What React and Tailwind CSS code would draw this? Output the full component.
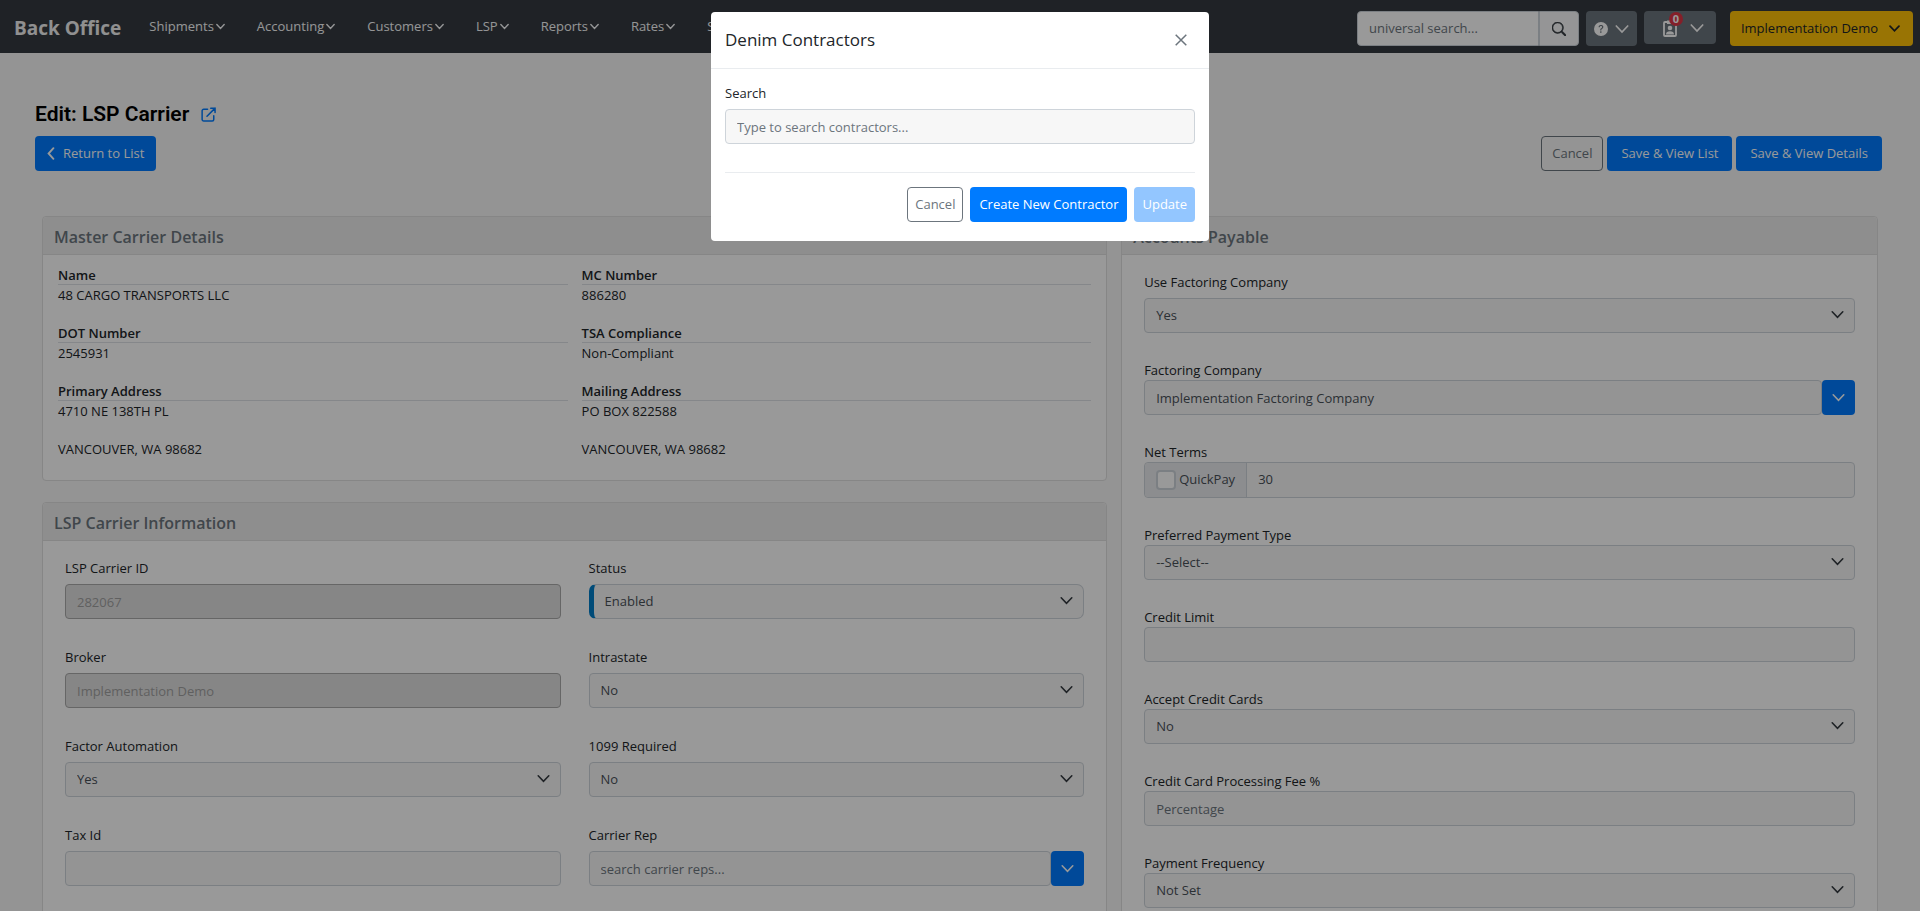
import React, { useState } from "react";
import { BsQuestionCircleFill, BsSearch } from "react-icons/bs";

const navItems = ["Shipments", "Accounting", "Customers", "LSP", "Reports", "Rates", "Settings"];

const carrierDetails = [
  { label: "Name", lines: ["48 CARGO TRANSPORTS LLC"] },
  { label: "MC Number", lines: ["886280"] },
  { label: "DOT Number", lines: ["2545931"] },
  { label: "TSA Compliance", lines: ["Non-Compliant"] },
  { label: "Primary Address", lines: ["4710 NE 138TH PL", "VANCOUVER, WA 98682"] },
  { label: "Mailing Address", lines: ["PO BOX 822588", "VANCOUVER, WA 98682"] },
];

const controlClass =
  "block w-full h-[35px] rounded border border-[#ced4da] bg-[#f7f7f7] px-[11px] text-[13px] text-[#495057] placeholder:text-[#6c757d] focus:outline-none";

const disabledClass =
  "block w-full h-[35px] rounded border border-[#aaaaaa] bg-[#e0e0e0] px-[11px] text-[13px] text-[#a0a0a0]";

function ChevronDown({ className, strokeWidth = 1.7 }) {
  return (
    <svg viewBox="0 0 14 14" className={className} fill="none" stroke="currentColor" strokeWidth={strokeWidth} strokeLinecap="round">
      <path d="M1.3 4l5.7 6 5.7-6" />
    </svg>
  );
}

function ChevronLeft({ className }) {
  return (
    <svg viewBox="0 0 8 14" className={className} fill="none" stroke="currentColor" strokeWidth="2" strokeLinecap="round">
      <path d="M6.6 1.3L1.4 7l5.2 5.7" />
    </svg>
  );
}

function ExternalLink({ className }) {
  return (
    <svg viewBox="0 0 16 16" className={className} fill="none" stroke="currentColor" strokeWidth="1.6" strokeLinecap="round" strokeLinejoin="round">
      <path d="M7 2.4H2.8A1.6 1.6 0 0 0 1.2 4v9.2a1.6 1.6 0 0 0 1.6 1.6H12a1.6 1.6 0 0 0 1.6-1.6V9.4" />
      <path d="M6.4 9.8L15 1.2M10.4 1.2H15v4.6" />
    </svg>
  );
}

function ClipboardUser({ className }) {
  return (
    <svg viewBox="0 0 14 18" className={className}>
      <rect x="1" y="3" width="12" height="14" rx="1" fill="none" stroke="currentColor" strokeWidth="1.8" />
      <path fill="currentColor" d="M4 1.5h2a1.2 1.2 0 0 1 2 0h2v3.5H4z" />
      <circle cx="7" cy="9" r="2.3" fill="currentColor" />
      <path fill="currentColor" d="M3 15.4c0-2 1.5-3.2 4-3.2s4 1.2 4 3.2z" />
    </svg>
  );
}

function Card({ title, children }) {
  return (
    <section className="rounded border border-[#dfdfdf] bg-white">
      <h2 className="rounded-t border-b border-[#dfdfdf] bg-[#ededed] px-[11px] pt-[10px] pb-[6px] text-base leading-[21px] font-semibold text-[#6c757d]">
        {title}
      </h2>
      {children}
    </section>
  );
}

function Field({ id, label, tight, children }) {
  return (
    <div>
      <label htmlFor={id} className={tight ? "block leading-[19px]" : "mb-[6px] block leading-5"}>
        {label}
      </label>
      {children}
    </div>
  );
}

function Select({ id, options, accent }) {
  return (
    <div className="relative">
      <select
        id={id}
        className={
          accent
            ? "block w-full h-[35px] appearance-none rounded-[7px] border border-l-[5px] border-[#ced4da] border-l-[#007dc8] bg-[#f7f7f7] px-[11px] text-[13px] text-[#495057] focus:outline-none"
            : controlClass + " appearance-none"
        }
      >
        {options.map((option) => (
          <option key={option}>{option}</option>
        ))}
      </select>
      <ChevronDown className="pointer-events-none absolute top-[10px] right-[11px] h-[13px] w-[13px] text-[#343a40]" />
    </div>
  );
}

function Combo({ id, value, placeholder }) {
  return (
    <div className="flex">
      <input id={id} type="text" defaultValue={value} placeholder={placeholder} className={controlClass + " min-w-0 flex-1"} />
      <button type="button" aria-label="Show options" className="flex h-[35px] w-[33px] items-center justify-center rounded bg-[#007bff] text-white">
        <ChevronDown className="h-[13px] w-[13px]" />
      </button>
    </div>
  );
}

function Navbar() {
  return (
    <header className="flex h-[53px] items-start justify-between bg-[#343a40] pr-[7px] pl-[14px] text-[#f8f9fa]">
      <div className="flex items-start">
        <a href="#" className="mr-[28px] py-[15px] text-[19px] leading-[26px] font-bold text-[#f0f0f0]">
          Back Office
        </a>
        <nav className="flex gap-8 pt-4">
          {navItems.map((item) => (
            <a key={item} href="#" className="flex items-center gap-[2px] leading-5">
              {item}
              <ChevronDown className="h-[9px] w-[9px]" strokeWidth={2.2} />
            </a>
          ))}
        </nav>
      </div>

      <div className="flex items-start pt-[11px]">
        <div className="mr-[7px] flex h-[35px]">
          <input
            type="text"
            aria-label="universal search"
            placeholder="universal search..."
            className="w-[182px] rounded-l border border-[#ced4da] bg-white px-[11px] text-[13px] placeholder:text-[#6c757d]"
          />
          <button type="button" aria-label="Search" className="flex w-10 items-center justify-center rounded-r border border-[#ced4da] bg-[#f8f9fa] text-[#343a40]">
            <BsSearch className="h-[14px] w-[14px]" strokeWidth={0.7} />
          </button>
        </div>
        <button type="button" aria-label="Help" className="mr-[7px] flex h-[35px] w-[51px] items-center justify-center gap-[7px] rounded bg-[#6c757d] text-white">
          <BsQuestionCircleFill className="h-[14px] w-[14px]" />
          <ChevronDown className="h-[14px] w-[14px]" />
        </button>
        <button type="button" aria-label="Tasks" className="relative mr-[14px] flex h-[33px] w-[72px] items-center justify-center gap-[13px] rounded bg-[#6c757d] pl-2 text-white">
          <ClipboardUser className="h-[18px] w-[14px]" />
          <ChevronDown className="h-[14px] w-[14px]" />
          <span className="absolute top-[1px] left-[25px] flex h-[14px] w-[14px] items-center justify-center rounded-full bg-[#dc3545] text-[11px] font-bold">
            0
          </span>
        </button>
        <button type="button" className="flex h-[35px] items-center gap-[11px] rounded bg-[#ffc107] pr-[13px] pl-[11px] text-[#212529]">
          Implementation Demo
          <ChevronDown className="h-[11px] w-[11px]" strokeWidth={2.2} />
        </button>
      </div>
    </header>
  );
}

function ContractorModal({ onClose }) {
  return (
    <div className="fixed inset-0 bg-black/40 px-4 pt-3">
      <div role="dialog" aria-labelledby="modal-title" className="mx-auto max-w-[498px] rounded bg-white">
        <div className="flex h-[57px] items-center justify-between border-b border-[#e9ecef] px-[14px]">
          <h2 id="modal-title" className="text-[17px] leading-6 font-medium text-[#212529]">
            Denim Contractors
          </h2>
          <button type="button" aria-label="Close" onClick={onClose} className="p-2 text-[#6c757d]">
            <svg viewBox="0 0 12 12" className="h-3 w-3" fill="none" stroke="currentColor" strokeWidth="1.5">
              <path d="M0.7 0.7l10.6 10.6M11.3 0.7L0.7 11.3" />
            </svg>
          </button>
        </div>
        <div className="px-[14px] pt-[14px] pb-[19px]">
          <Field id="contractor-search" label="Search">
            <input id="contractor-search" type="text" placeholder="Type to search contractors..." className={controlClass} />
          </Field>
          <hr className="mt-7 mb-[14px] border-[#e9ecef]" />
          <div className="flex justify-end gap-[7px]">
            <button type="button" onClick={onClose} className="h-[35px] rounded border border-[#6c757d] px-[7px] text-[#6c757d]">
              Cancel
            </button>
            <button type="button" className="h-[35px] rounded bg-[#007bff] px-[9px] font-medium text-white">
              Create New Contractor
            </button>
            <button type="button" disabled className="h-[35px] rounded bg-[#93c6ff] px-2 font-medium text-white">
              Update
            </button>
          </div>
        </div>
      </div>
    </div>
  );
}

export default function App() {
  const [showModal, setShowModal] = useState(true);

  return (
    <div className="h-screen overflow-hidden bg-[#f7f7f7] font-['Open_Sans','Noto_Sans',sans-serif] text-[13px] text-[#212529]">
      <Navbar />

      <main className="px-[35px] pt-[49px]">
        <h1 className="flex items-center gap-3 font-[Roboto,sans-serif] text-[21px] leading-6 font-semibold text-black">
          Edit: LSP Carrier
          <a href="#" aria-label="Open in new tab" className="text-[#007bff]">
            <ExternalLink className="h-[15px] w-[15px]" />
          </a>
        </h1>

        <div className="mt-[10px] flex items-center justify-between">
          <a href="#" className="flex h-[35px] items-center gap-2 rounded bg-[#007bff] px-3 text-white">
            <ChevronLeft className="h-[13px] w-2" />
            Return to List
          </a>
          <div className="flex gap-1 pr-[3px]">
            <button type="button" className="h-[35px] rounded border border-[#6c757d] px-[10px] text-[#6c757d]">
              Cancel
            </button>
            <button type="button" className="h-[35px] rounded bg-[#007bff] px-[14px] text-white">
              Save &amp; View List
            </button>
            <button type="button" className="h-[35px] rounded bg-[#007bff] px-[14px] text-white">
              Save &amp; View Details
            </button>
          </div>
        </div>

        <div className="mt-[45px] grid grid-cols-[7fr_5fr]">
          <div className="flex flex-col gap-[21px] px-[7px]">
            <Card title="Master Carrier Details">
              <dl className="grid grid-cols-2 gap-x-[14px] gap-y-[19px] px-[15px] pt-[11px] pb-[21px]">
                {carrierDetails.map((item) => (
                  <div key={item.label}>
                    <dt className="border-b border-[#dee2e6] leading-[18px] font-semibold">{item.label}</dt>
                    <dd className="flex flex-col gap-[18px] leading-5">
                      {item.lines.map((line) => (
                        <span key={line}>{line}</span>
                      ))}
                    </dd>
                  </div>
                ))}
              </dl>
            </Card>

            <Card title="LSP Carrier Information">
              <div className="grid grid-cols-2 gap-7 px-[22px] pt-[17px] pb-7">
                <Field id="carrier-id" label="LSP Carrier ID">
                  <input id="carrier-id" type="text" disabled defaultValue="282067" className={disabledClass} />
                </Field>
                <Field id="status" label="Status">
                  <Select id="status" accent options={["Enabled", "Disabled"]} />
                </Field>
                <Field id="broker" label="Broker">
                  <input id="broker" type="text" disabled defaultValue="Implementation Demo" className={disabledClass} />
                </Field>
                <Field id="intrastate" label="Intrastate">
                  <Select id="intrastate" options={["No", "Yes"]} />
                </Field>
                <Field id="factor-automation" label="Factor Automation">
                  <Select id="factor-automation" options={["Yes", "No"]} />
                </Field>
                <Field id="required-1099" label="1099 Required">
                  <Select id="required-1099" options={["No", "Yes"]} />
                </Field>
                <Field id="tax-id" label="Tax Id">
                  <input id="tax-id" type="text" className={controlClass} />
                </Field>
                <Field id="carrier-rep" label="Carrier Rep">
                  <Combo id="carrier-rep" placeholder="search carrier reps..." />
                </Field>
              </div>
            </Card>
          </div>

          <div className="px-[7px]">
            <Card title="Accounts Payable">
              <div className="flex flex-col gap-7 px-[22px] pt-[17px] pb-7">
                <Field id="use-factoring" label="Use Factoring Company">
                  <Select id="use-factoring" options={["Yes", "No"]} />
                </Field>
                <Field id="factoring-company" label="Factoring Company" tight>
                  <Combo id="factoring-company" value="Implementation Factoring Company" />
                </Field>
                <Field id="net-terms" label="Net Terms" tight>
                  <div className="flex h-9 rounded border border-[#ced4da] bg-[#f7f7f7] text-[#495057]">
                    <label className="flex items-center gap-[3px] rounded-l border-r border-[#ced4da] bg-[#e9ecef] px-[11px]">
                      <input type="checkbox" className="h-5 w-5 appearance-none rounded border-2 border-[#ced4da] bg-white" />
                      QuickPay
                    </label>
                    <input id="net-terms" type="text" defaultValue="30" className="min-w-0 flex-1 px-[11px] focus:outline-none" />
                  </div>
                </Field>
                <Field id="payment-type" label="Preferred Payment Type" tight>
                  <Select id="payment-type" options={["--Select--", "Check", "ACH"]} />
                </Field>
                <Field id="credit-limit" label="Credit Limit" tight>
                  <input id="credit-limit" type="text" className={controlClass} />
                </Field>
                <Field id="accept-cards" label="Accept Credit Cards" tight>
                  <Select id="accept-cards" options={["No", "Yes"]} />
                </Field>
                <Field id="card-fee" label="Credit Card Processing Fee %" tight>
                  <input id="card-fee" type="text" placeholder="Percentage" className={controlClass} />
                </Field>
                <Field id="payment-frequency" label="Payment Frequency" tight>
                  <Select id="payment-frequency" options={["Not Set", "Weekly", "Monthly"]} />
                </Field>
              </div>
            </Card>
          </div>
        </div>
      </main>

      {showModal && <ContractorModal onClose={() => setShowModal(false)} />}
    </div>
  );
}
